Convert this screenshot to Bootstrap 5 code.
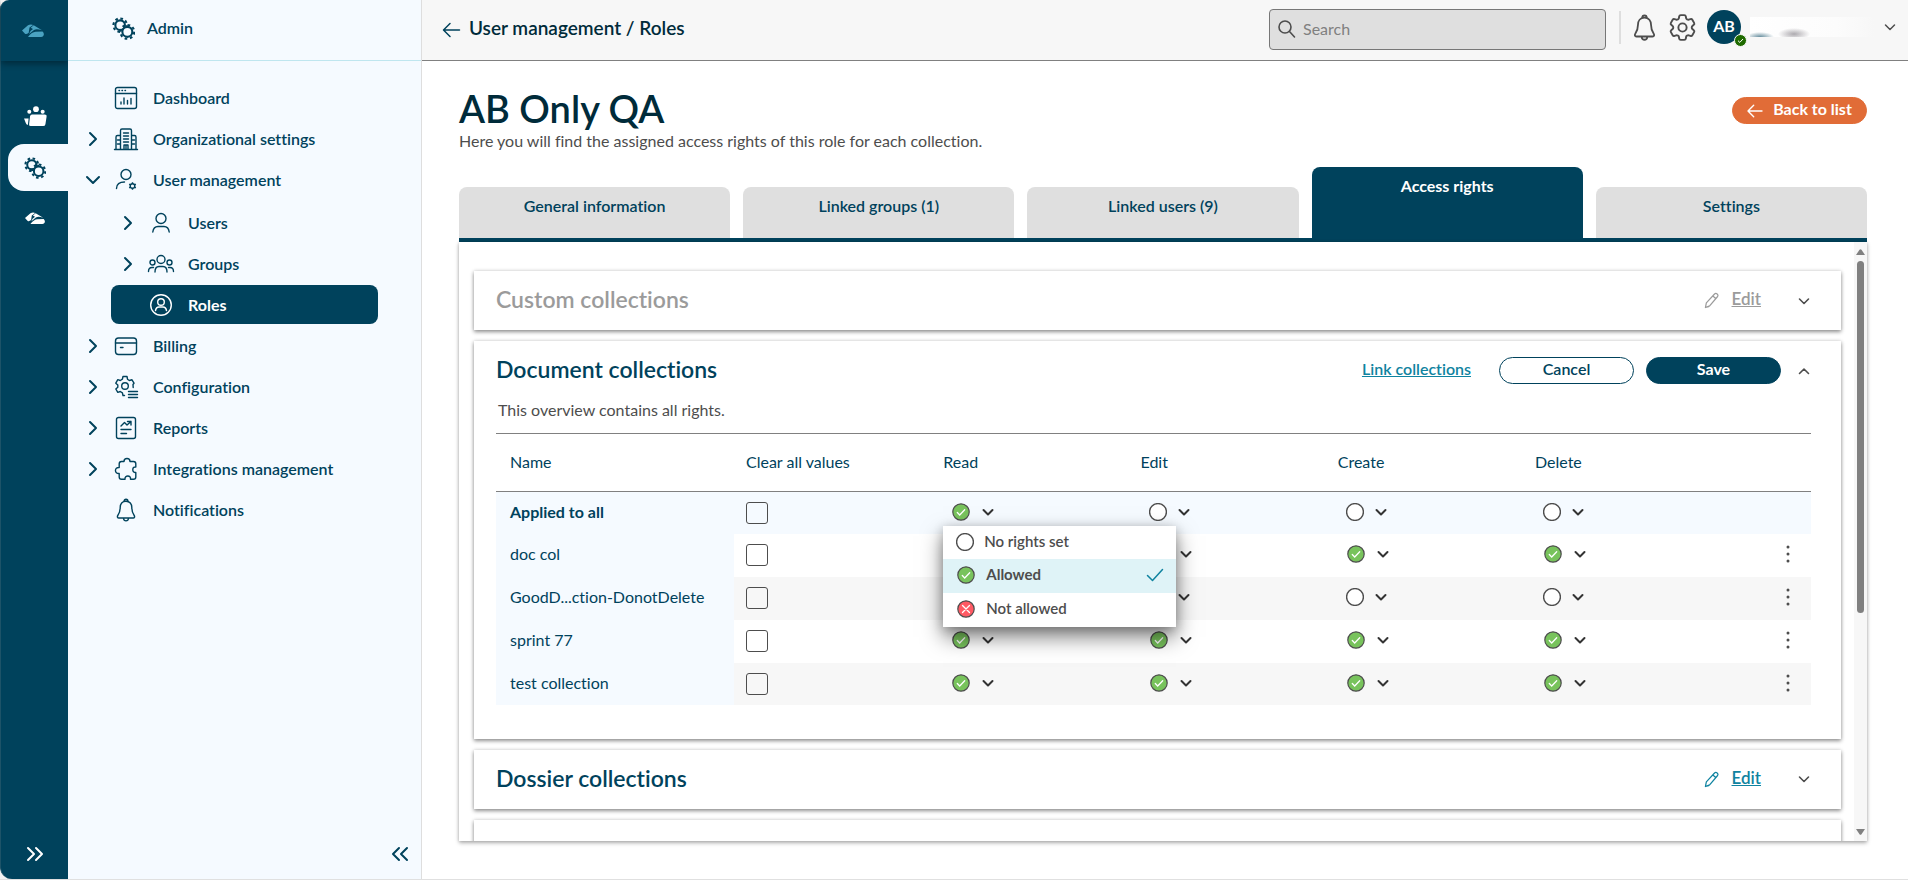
<!DOCTYPE html>
<html lang="en">
<head>
<meta charset="utf-8">
<meta name="viewport" content="width=device-width, initial-scale=1">
<title>User management / Roles</title>
<link href="https://cdn.jsdelivr.net/npm/bootstrap@5.3.0/dist/css/bootstrap.min.css" rel="stylesheet">
<style>
:root { --navy: #00425c; --ink: #002b3a; --teal: #0f83a0; --pale: #f5faff; --grey: #4d4d4d; --line: #808080; }
body { font-family: Lato, "Open Sans", sans-serif; font-size: 16px; line-height: 22px; color: var(--grey); font-variant-ligatures: none; background: #f2f2f2; }
svg { display: block; flex: none; overflow: visible; }
.ico { fill: none; stroke: currentColor; stroke-width: 2; stroke-linecap: round; stroke-linejoin: round; }
.iconbtn { border: 0; background: none; padding: 0; color: inherit; display: block; }
.app-frame { border-bottom: 1px solid #e0e0e0; }

/* Module rail */
.rail { width: 68px; background: var(--navy); color: #fff; border-radius: 9px 0 0 12px; border-left: 1px solid #1d5368; }
.rail-logo { height: 61px; color: #4aa3c2; box-shadow: 0 3px 6px rgba(0,0,0,.35); padding-right: 3px; }
.rail a { color: #fff; height: 47px; margin-left: 7px; padding-right: 6px; }
.rail a.current { background: var(--pale); color: var(--navy); border-radius: 16px 0 0 16px; }

/* Section menu */
.side { width: 354px; background: var(--pale); border-right: 1px solid #dedede; color: var(--navy); font-weight: 600; }
.side-head { height: 61px; border-bottom: 1px solid #bfe6ef; padding: 0 0 4px 44px; gap: 12px; }
.menu { padding-top: 16px; }
.menu a { color: var(--navy); text-decoration: none; display: flex; align-items: center; height: 41px; padding-left: 14px; }
.menu .twist { width: 22px; height: 22px; margin-right: 10px; }
.menu .glyph { width: 24px; height: 24px; margin-right: 15px; stroke-width: 1.4; }
.menu ul { margin: 3px 0 1px; }
.menu ul a { height: 39px; margin: 2px 43px 0; padding-left: 6px; border-radius: 8px; }
.menu ul a.current { background: var(--navy); color: #fff; font-weight: 700; }

/* Top bar */
.topbar { height: 61px; background: #f7f7f7; border-bottom: 1px solid var(--line); padding: 0 11px 2px 20px; }
.crumbs { color: var(--ink); font-size: 19px; font-weight: 600; text-decoration: none; padding-bottom: 2px; }
.searchbox { width: 337px; height: 41px; background: #dfdfdf; border: 1px solid #777; border-radius: 4px; padding: 0 8px; gap: 8px; margin-right: 13px; }
.searchbox input { border: 0; background: none; outline: 0; width: 100%; height: 32px; line-height: 30px; padding: 0 0 2px; color: var(--grey); }
.searchbox input::placeholder { color: #808080; opacity: 1; }
.divider { width: 2px; height: 33px; background: #dedede; margin-right: 10px; }
.avatar { width: 34px; height: 34px; border-radius: 50%; background: var(--navy); color: #fff; font-weight: 700; margin: 0 9px 0 8px; padding-bottom: 2px; }
.avatar svg { right: -6px; bottom: -3px; }
.username { width: 124px; height: 20px; margin-right: 9px; background: radial-gradient(14px 5px at 10px 20px, #00425c99, transparent), radial-gradient(16px 6px at 44px 17px, #66616a88, transparent), linear-gradient(90deg, #fff, #fcfcfc 70%, #f7f7f7); }

/* Page heading and tabs */
.page { padding: 25px 41px 38px 37px; }
h1 { font-size: 38px; line-height: 44px; font-weight: 600; color: var(--ink); }
.btn { line-height: 22px; font-size: 16px; height: 27px; border-radius: 14px; padding: 0 14px 4px; display: flex; align-items: center; justify-content: center; font-weight: 700; }
.btn-back { --bs-btn-bg: #e16c37; --bs-btn-color: #fff; --bs-btn-border-color: #e16c37; --bs-btn-hover-bg: #c95a28; --bs-btn-hover-color: #fff; width: 135px; margin-top: 11px; gap: 10px; }
.btn-save { --bs-btn-bg: var(--navy); --bs-btn-color: #fff; --bs-btn-border-color: var(--navy); --bs-btn-hover-bg: var(--ink); --bs-btn-hover-color: #fff; width: 135px; }
.btn-cancel { --bs-btn-bg: #fff; --bs-btn-color: var(--navy); --bs-btn-border-color: var(--navy); --bs-btn-hover-color: var(--navy); width: 135px; margin: 0 12px 0 28px; font-weight: 600; }
.tabbar { border-bottom: 4px solid var(--navy); gap: 13px; margin-top: 15px; }
.tabbar a { flex: 1 1 0; height: 51px; padding-top: 8px; background: #dfdfdf; color: var(--navy); text-align: center; text-decoration: none; font-weight: 600; border-radius: 8px 8px 0 0; }
.tabbar a.active { height: 71px; background: var(--navy); color: #fff; font-weight: 700; }

/* Scrolling panel */
.panel { min-height: 0; box-shadow: 0 2px 4px rgba(0,0,0,.3), 0 0 3px rgba(0,0,0,.15); background: #fff; }
.panel-body { padding: 29px 13px 0 15px; gap: 11px; overflow: hidden; }
.track { width: 13px; background: #f7f7f7; padding: 7px 0 6px; color: var(--line); }
.thumb { width: 7px; height: 60%; margin: 6px 0 auto; border-radius: 4px; background: var(--line); }
.box { flex: none; background: #fff; padding: 0 30px 0 22px; box-shadow: 0 2px 4px rgba(0,0,0,.4), 0 0 4px rgba(0,0,0,.15); }
.box-head { height: 59px; }
.box-head h2 { font-size: 23px; line-height: 26px; font-weight: 600; color: var(--navy); margin: 0 auto 0 0; padding-bottom: 3px; }
.box-head a { color: var(--teal); font-weight: 600; padding-bottom: 3px; }
.box-head .edit { font-size: 17px; }
.box-head .edit svg { margin: 3px 13px 0 0; }
.box-head .edit + button { margin-left: 36px; }
.box-head.muted h2, .box-head.muted a { color: #9b9b9b; }
.box-open { padding-bottom: 34px; }
.intro { margin: 0 0 13px 2px; line-height: 20px; }

/* Rights table */
.rights { table-layout: fixed; border-top: 1px solid var(--line); --bs-table-color: var(--navy); color: var(--navy); margin: 0; }
.rights th, .rights td { height: 43px; padding: 0 12px 2px; border: 0; vertical-align: middle; font-weight: 400; }
.rights thead th { height: 58px; border-bottom: 1px solid var(--line); }
.rights tbody tr:first-child > *, .rights tbody tr:last-child > * { height: 42px; }
.rights th:first-child { width: 238px; padding-left: 14px; }
.rights thead th { width: 15%; }
.rights thead th:last-child { width: auto; }
.rights tbody th { --bs-table-bg: var(--pale); }
.rights tbody tr:nth-child(2n+3) { --bs-table-bg: #f7f7f7; }
.rights tbody tr.summary { --bs-table-bg: var(--pale); }
.rights .summary th { font-weight: 700; }
.rights .form-check-input { width: 22px; height: 22px; margin: 2px 0 0; border: 1px solid #4d4d4d; border-radius: 3px; background-color: transparent; display: block; }
.pick { border: 0; background: none; padding: 0 0 0 8px; display: flex; align-items: center; gap: 10px; color: #333; }
.choices { top: 24px; left: 0; width: 233px; padding: 0; border: 0; border-radius: 0; box-shadow: 0 10px 20px rgba(0,0,0,.5), 0 2px 10px rgba(0,0,0,.2); font-size: 15px; }
.choices .dropdown-item { height: 34px; padding: 0 12px 3px 13px; display: flex; align-items: center; gap: 10px; color: var(--grey); line-height: 20px; font-weight: 600; }
.choices .dropdown-item:first-child { height: 33px; }
.choices .picked { background: #dff3f7; font-weight: 700; }
.choices svg { margin-top: 2px; }
</style>
</head>
<body>
<svg width="0" height="0" class="position-absolute" aria-hidden="true">
  <defs>
    <mask id="cut"><path fill="#fff" d="M-2-2h30v30h-30z"/><circle cx="16" cy="15.500" r="5.800" fill="#000"/></mask>
    <symbol id="gears" viewBox="0 0 24 24"><g fill="none" stroke="currentColor"><g mask="url(#cut)"><circle cx="8.500" cy="8.500" r="5" stroke-width="2.200"/><circle cx="8.500" cy="8.500" r="7" stroke-width="2.200" stroke-dasharray="2.800 2.698"/></g><circle cx="16" cy="15.500" r="5.200" stroke-width="2.200"/><circle cx="16" cy="15.500" r="7.200" stroke-width="2.200" stroke-dasharray="2.800 2.855"/></g></symbol>
    <symbol id="logo" viewBox="0 0 22 14"><g fill="currentColor"><path d="M0 6.500 6 1.300Q8.500-.3 11.200.9L7.500 3.600 6.700 8.700Q4.500 10.500 3 9.700Z"/><path d="M8.700 3.800 11.700 1.200 20 6.300Q14.500 4.200 12 6L7 10Q7.800 6.800 11 5Z"/><path d="M6.300 12.600Q10 8 13.500 7.800L20.500 7.600Q23 10 21 12.200 20.500 13 19 13H7Q6 13.200 6.300 12.600Z"/></g></symbol>
    <symbol id="team" viewBox="0 0 24 22"><g fill="currentColor"><circle cx="12.500" cy="3.300" r="3"/><circle cx="5.500" cy="6" r="2.100"/><circle cx="19.500" cy="6" r="2.100"/><path d="M8.300 9H21.500Q24 9 23.600 11.300L22.400 19Q22 21 20 21H7Q5 21 5.300 19L6.300 10.800Q6.600 9 8.300 9Z"/><path d="M0 13H4.800L4 20Q2.200 19.500 1.700 17.500Z"/></g></symbol>
    <symbol id="down" viewBox="0 0 14 14"><path d="m2.500 5 4.500 4.500L11.500 5"/></symbol>
    <symbol id="up" viewBox="0 0 14 14"><path d="M2.500 9.500 7 5l4.500 4.500"/></symbol>
    <symbol id="back" viewBox="0 0 18 16"><path d="M17 8H1.500M7.500 1.500 1 8l6.500 6.500"/></symbol>
    <symbol id="bell" viewBox="0 0 24 24"><path d="M12 3.200c-3.800 0-5.800 2.900-5.800 6.300 0 4-.6 5.500-2.400 8-.8 1.200-.3 2.500 1 2.500h14.400c1.300 0 1.800-1.300 1-2.500-1.800-2.500-2.400-4-2.400-8 0-3.400-2-6.300-5.800-6.300ZM10 3.500c0-3 4-3 4 0M9.500 20.500c.4 3.200 4.600 3.200 5 0"/></symbol>
    <symbol id="cog" viewBox="0 0 24 24"><path d="M9.594 3.940c.09-.542.56-.94 1.110-.94h2.593c.55 0 1.020.398 1.110.94l.213 1.281c.063.374.313.686.645.87.074.04.147.083.22.127.325.196.72.257 1.075.124l1.217-.456a1.125 1.125 0 0 1 1.370.49l1.296 2.247a1.125 1.125 0 0 1-.26 1.431l-1.003.827c-.293.241-.438.613-.43.992a7.723 7.723 0 0 1 0 .255c-.008.378.137.75.43.991l1.004.827c.424.35.534.955.26 1.430l-1.298 2.247a1.125 1.125 0 0 1-1.369.491l-1.217-.456c-.355-.133-.75-.072-1.076.124a6.470 6.470 0 0 1-.22.128c-.331.183-.581.495-.644.869l-.213 1.281c-.09.543-.56.94-1.110.94h-2.594c-.55 0-1.019-.398-1.110-.94l-.213-1.281c-.062-.374-.312-.686-.644-.87a6.520 6.520 0 0 1-.22-.127c-.325-.196-.72-.257-1.076-.124l-1.217.456a1.125 1.125 0 0 1-1.369-.49l-1.297-2.247a1.125 1.125 0 0 1 .26-1.431l1.004-.827c.292-.24.437-.613.43-.991a6.932 6.932 0 0 1 0-.255c.007-.38-.138-.751-.43-.992l-1.004-.827a1.125 1.125 0 0 1-.26-1.430l1.297-2.247a1.125 1.125 0 0 1 1.370-.491l1.216.456c.356.133.751.072 1.076-.124.072-.044.146-.086.22-.128.332-.183.582-.495.644-.869l.214-1.280Z"/><circle cx="12" cy="12" r="3"/></symbol>
    <symbol id="user" viewBox="0 0 24 24"><circle cx="12" cy="7.500" r="5"/><path d="M3.800 21c.5-4 2.200-5.500 5.200-5.500h6c3 0 4.700 1.500 5.200 5.500"/></symbol>
    <symbol id="pencil" viewBox="0 0 16 18"><path d="m1.500 16.500 1-5L11 2.300c2-2 5 .5 3.300 2.700L6 14.700ZM9.500 4.200l3 2.700M1.500 16.500l3.500-1"/></symbol>
    <symbol id="allowed" viewBox="0 0 20 20"><circle cx="10" cy="10" r="8.200" fill="#78c35c" stroke="#4d4d4d" stroke-width="1.200"/><path d="m6.300 10.500 2.400 2.500 5-5.300" fill="none" stroke="#fff" stroke-width="1.300" stroke-linecap="round"/></symbol>
    <symbol id="denied" viewBox="0 0 20 20"><circle cx="10" cy="10" r="8.200" fill="#ff5a64" stroke="#4d4d4d" stroke-width="1.200"/><path d="m6.500 6.500 7 7m0-7-7 7" fill="none" stroke="#fff" stroke-width="1.300" stroke-linecap="round"/></symbol>
    <symbol id="unset" viewBox="0 0 18 18"><circle cx="9" cy="9" r="8.400" fill="#fff" stroke="#4d4d4d" stroke-width="1.400"/></symbol>
    <symbol id="dots" viewBox="0 0 6 20"><g fill="#4d4d4d"><circle cx="3" cy="3" r="1.500"/><circle cx="3" cy="10" r="1.500"/><circle cx="3" cy="17" r="1.500"/></g></symbol>
  </defs>
</svg>

<div class="app-frame d-flex vh-100 overflow-hidden">
  <nav class="rail d-flex flex-column flex-shrink-0" aria-label="Modules">
    <div class="rail-logo d-flex align-items-center justify-content-center"><svg width="22" height="14"><use href="#logo"/></svg></div>
    <div class="d-flex flex-column gap-1 pt-4 mt-2">
      <a href="#" class="d-flex align-items-center justify-content-center" aria-label="Collaboration"><svg width="23" height="21"><use href="#team"/></svg></a>
      <a href="#" class="current d-flex align-items-center justify-content-center" aria-label="Admin"><svg width="22" height="22"><use href="#gears"/></svg></a>
      <a href="#" class="d-flex align-items-center justify-content-center" aria-label="Home"><svg width="20" height="13"><use href="#logo"/></svg></a>
    </div>
    <button class="iconbtn mt-auto mb-3 align-self-center" aria-label="Expand modules"><svg class="ico" width="18" height="18" viewBox="0 0 18 18"><path d="m2 3 6 6-6 6M10 3l6 6-6 6"/></svg></button>
  </nav>

  <aside class="side d-flex flex-column flex-shrink-0">
    <div class="side-head d-flex align-items-center"><svg width="23" height="23"><use href="#gears"/></svg>Admin</div>
    <ul class="menu list-unstyled mb-0">
      <li><a href="#"><span class="twist"></span><svg class="ico glyph" viewBox="0 0 24 24"><rect x="1.500" y="1.500" width="21" height="21" rx="2"/><path d="M1.500 7.500h21M5 4.500h.5M8 4.500h.5M11 4.500h.5M7 18v-2M10 18v-6M13.500 18v-3.500M17 18v-5.500"/></svg>Dashboard</a></li>
      <li><a href="#"><svg class="ico twist" viewBox="0 0 22 22"><path d="m8 5 6 6-6 6"/></svg><svg class="ico glyph" viewBox="0 0 24 24"><path d="M.5 22.500h23M2 22.500V10c0-1 .5-1.500 1.500-1.500h3M22 22.500V10c0-1-.5-1.500-1.500-1.500h-3M6.500 22.500v-19c0-1 .5-1.500 1.500-1.500h8c1 0 1.500.5 1.500 1.500v19M9.500 6h5M9.500 9h5M9.500 12h5M9.500 15h5M3.500 13h2M3.500 17h2M18.500 13h2M18.500 17h2M10 22.500V18h4v4.500M12 18v4.500"/></svg>Organizational settings</a></li>
      <li><a href="#"><svg class="ico twist" viewBox="0 0 22 22"><path d="m5 8 6 6 6-6"/></svg><svg class="ico glyph" viewBox="0 0 24 24"><circle cx="12" cy="6.500" r="5"/><path d="M2.500 20.500c0-4.500 3-6.500 8-6.500"/><circle cx="18.500" cy="18" r="2.300"/><path stroke-linecap="butt" d="M18.500 14.200v1.500M18.500 20.300v1.500M15.200 16.100l1.300.8M20.500 19.100l1.300.8M15.200 19.900l1.300-.8M20.500 16.900l1.300-.8"/></svg>User management</a>
        <ul class="list-unstyled">
          <li><a href="#"><svg class="ico twist" viewBox="0 0 22 22"><path d="m8 5 6 6-6 6"/></svg><svg class="ico glyph"><use href="#user"/></svg>Users</a></li>
          <li><a href="#"><svg class="ico twist" viewBox="0 0 22 22"><path d="m8 5 6 6-6 6"/></svg><svg class="ico glyph" viewBox="0 0 24 24"><circle cx="12" cy="7.500" r="4"/><circle cx="3.500" cy="10.500" r="2.500"/><circle cx="20.500" cy="10.500" r="2.500"/><path d="M6 20c0-4 1.500-5.500 4-5.500h4c2.500 0 4 1.500 4 5.500M-.5 19.500c0-2.500.8-4 3.500-4h1.500M24.500 19.500c0-2.500-.8-4-3.500-4h-1.500"/></svg>Groups</a></li>
          <li><a href="#" class="current"><span class="twist"></span><svg class="ico glyph" viewBox="0 0 24 24"><circle cx="12" cy="12" r="10.300"/><circle cx="12" cy="9" r="3.300"/><path d="M6.500 17.500c.5-2.700 1.500-3.500 3.500-3.500h4c2 0 3 .8 3.500 3.500"/></svg>Roles</a></li>
        </ul>
      </li>
      <li><a href="#"><svg class="ico twist" viewBox="0 0 22 22"><path d="m8 5 6 6-6 6"/></svg><svg class="ico glyph" viewBox="0 0 24 24"><rect x="1.500" y="4" width="21" height="16.500" rx="3"/><path d="M1.500 9h21M6.500 13.500h2.500"/></svg>Billing</a></li>
      <li><a href="#"><svg class="ico twist" viewBox="0 0 22 22"><path d="m8 5 6 6-6 6"/></svg><svg class="ico glyph" viewBox="0 0 24 24"><circle cx="11" cy="11" r="3.300"/><path d="M19.200 12.500 19 9.500 20 8.200 18 4.800 15.300 5.500 13.500 4.200 13 1.500H9L8.400 4.200 6.300 5.500 3.800 4.700 1.800 8.200 3.800 10v2.200L1.800 14l2 3.300 2.500-.8 2.100 1.300.6 2.700h1.500M14.500 16.500h9M14.500 19.500h9M14.500 22.500h9"/></svg>Configuration</a></li>
      <li><a href="#"><svg class="ico twist" viewBox="0 0 22 22"><path d="m8 5 6 6-6 6"/></svg><svg class="ico glyph" viewBox="0 0 24 24"><rect x="2.500" y="1.500" width="19" height="21" rx="2"/><path d="m7 10 3.500-3.500L13 9l4-3.500M13.500 5.500H17V9M7 13.500h10M7 17.500h5.500"/></svg>Reports</a></li>
      <li><a href="#"><svg class="ico twist" viewBox="0 0 22 22"><path d="m8 5 6 6-6 6"/></svg><svg class="ico glyph" viewBox="0 0 24 24"><path d="M10 4.500c0-4 6-4 6 0h3.500c1.500 0 2.300.8 2.300 2.300V10c-4-.8-4 6 0 5.500v4.500c0 1.500-.8 2.300-2.300 2.300h-3c.8-4.500-6-4.500-5.500 0H7.500c-1.500 0-2.300-.8-2.300-2.300v-3.500c-5 .5-5-6.500 0-6V6.800c0-1.500.8-2.300 2.300-2.300Z"/></svg>Integrations management</a></li>
      <li><a href="#"><span class="twist"></span><svg class="ico glyph"><use href="#bell"/></svg>Notifications</a></li>
    </ul>
    <button class="iconbtn mt-auto mb-3 me-2 pe-1 align-self-end" aria-label="Collapse menu"><svg class="ico" width="18" height="18" viewBox="0 0 18 18"><path d="M8 3 2 9l6 6M16 3l-6 6 6 6"/></svg></button>
  </aside>

  <div class="flex-grow-1 d-flex flex-column bg-white overflow-hidden">
    <header class="topbar d-flex align-items-center flex-shrink-0">
      <a href="#" class="crumbs d-flex align-items-center me-auto gap-2"><svg class="ico mt-1" style="color:var(--navy);stroke-width:1.500" width="19" height="16"><use href="#back"/></svg>User management / Roles</a>
      <div class="searchbox d-flex align-items-center"><label for="search" aria-label="Search"><svg class="ico" width="17" height="18" viewBox="0 0 17 18" style="stroke-width:1.600"><circle cx="7" cy="7" r="6"/><path d="m11.500 11.500 5 5.500"/></svg></label><input id="search" type="text" placeholder="Search"></div>
      <div class="d-flex align-items-center pb-1">
        <span class="divider"></span>
        <button class="iconbtn" aria-label="Notifications"><svg class="ico" width="27" height="27" style="stroke-width:1.600"><use href="#bell"/></svg></button>
        <button class="iconbtn ms-2" aria-label="Settings"><svg class="ico" width="33" height="33" style="stroke-width:1.400"><use href="#cog"/></svg></button>
        <div class="avatar position-relative d-flex align-items-center justify-content-center">AB<svg class="position-absolute" width="13" height="13" viewBox="0 0 13 13"><circle cx="6.500" cy="6.500" r="6" fill="#1f6a00" stroke="#f7f7f7"/><path d="m4 6.700 1.800 1.700L9 5" fill="none" stroke="#fff"/></svg></div>
        <div class="username"></div>
        <button class="iconbtn" aria-label="Account menu"><svg class="ico" width="14" height="14" style="stroke-width:1.500"><use href="#down"/></svg></button>
      </div>
    </header>

    <main class="page flex-grow-1 d-flex flex-column overflow-hidden">
      <div class="d-flex justify-content-between align-items-start">
        <div>
          <h1 class="mb-0">AB Only QA</h1>
          <p class="mb-0">Here you will find the assigned access rights of this role for each collection.</p>
        </div>
        <button class="btn btn-back"><svg class="ico mt-1" width="16" height="14" style="stroke-width:1.600"><use href="#back"/></svg>Back to list</button>
      </div>

      <nav class="tabbar d-flex align-items-end" aria-label="Role sections">
        <a href="#">General information</a>
        <a href="#">Linked groups (1)</a>
        <a href="#">Linked users (9)</a>
        <a href="#" class="active" aria-current="page">Access rights</a>
        <a href="#">Settings</a>
      </nav>

      <div class="panel flex-grow-1 d-flex">
        <div class="panel-body flex-grow-1 d-flex flex-column">
          <section class="box">
            <div class="box-head muted d-flex align-items-center">
              <h2>Custom collections</h2>
              <a href="#" class="edit d-flex align-items-center"><svg class="ico" width="15" height="17" style="stroke-width:1.300"><use href="#pencil"/></svg>Edit</a>
              <button class="iconbtn" aria-label="Expand"><svg class="ico" width="14" height="14" style="stroke-width:1.600"><use href="#down"/></svg></button>
            </div>
          </section>

          <section class="box box-open">
            <div class="box-head d-flex align-items-center">
              <h2>Document collections</h2>
              <a href="#">Link collections</a>
              <button class="btn btn-cancel">Cancel</button>
              <button class="btn btn-save">Save</button>
              <button class="iconbtn ms-3" aria-label="Collapse"><svg class="ico" width="14" height="14" style="stroke-width:1.600"><use href="#up"/></svg></button>
            </div>
            <p class="intro">This overview contains all rights.</p>
            <table class="table rights">
              <thead>
                <tr><th scope="col">Name</th><th scope="col">Clear all values</th><th scope="col">Read</th><th scope="col">Edit</th><th scope="col">Create</th><th scope="col">Delete</th><th></th></tr>
              </thead>
              <tbody>
                <tr class="summary">
                  <th scope="row">Applied to all</th>
                  <td><input class="form-check-input" type="checkbox" aria-label="Clear all"></td>
                  <td><div class="dropdown">
                    <button class="pick" aria-expanded="true" aria-label="Read: allowed"><svg width="20" height="20"><use href="#allowed"/></svg><svg class="ico" width="14" height="14"><use href="#down"/></svg></button>
                    <div class="dropdown-menu choices show">
                      <button class="dropdown-item"><svg width="18" height="18"><use href="#unset"/></svg>No rights set</button>
                      <button class="dropdown-item picked"><svg width="20" height="20"><use href="#allowed"/></svg>Allowed<svg class="ico ms-auto" width="18" height="14" viewBox="0 0 18 14" style="color:var(--teal);stroke-width:1.500"><path d="m1.500 7.500 5 5L16.500 1.500"/></svg></button>
                      <button class="dropdown-item"><svg width="20" height="20"><use href="#denied"/></svg>Not allowed</button>
                    </div>
                  </div></td>
                  <td><button class="pick" aria-label="Edit: no rights set"><svg width="18" height="18"><use href="#unset"/></svg><svg class="ico" width="14" height="14"><use href="#down"/></svg></button></td>
                  <td><button class="pick" aria-label="Create: no rights set"><svg width="18" height="18"><use href="#unset"/></svg><svg class="ico" width="14" height="14"><use href="#down"/></svg></button></td>
                  <td><button class="pick" aria-label="Delete: no rights set"><svg width="18" height="18"><use href="#unset"/></svg><svg class="ico" width="14" height="14"><use href="#down"/></svg></button></td>
                  <td></td>
                </tr>
                <tr>
                  <th scope="row">doc col</th>
                  <td><input class="form-check-input" type="checkbox" aria-label="Clear doc col"></td>
                  <td><button class="pick" aria-label="Read: allowed"><svg width="20" height="20"><use href="#allowed"/></svg><svg class="ico" width="14" height="14"><use href="#down"/></svg></button></td>
                  <td><button class="pick" aria-label="Edit: allowed"><svg width="20" height="20"><use href="#allowed"/></svg><svg class="ico" width="14" height="14"><use href="#down"/></svg></button></td>
                  <td><button class="pick" aria-label="Create: allowed"><svg width="20" height="20"><use href="#allowed"/></svg><svg class="ico" width="14" height="14"><use href="#down"/></svg></button></td>
                  <td><button class="pick" aria-label="Delete: allowed"><svg width="20" height="20"><use href="#allowed"/></svg><svg class="ico" width="14" height="14"><use href="#down"/></svg></button></td>
                  <td><button class="iconbtn ms-auto me-2" aria-label="More"><svg width="6" height="20"><use href="#dots"/></svg></button></td>
                </tr>
                <tr>
                  <th scope="row">GoodD...ction-DonotDelete</th>
                  <td><input class="form-check-input" type="checkbox" aria-label="Clear GoodD...ction-DonotDelete"></td>
                  <td><button class="pick" aria-label="Read: no rights set"><svg width="18" height="18"><use href="#unset"/></svg><svg class="ico" width="14" height="14"><use href="#down"/></svg></button></td>
                  <td><button class="pick" aria-label="Edit: no rights set"><svg width="18" height="18"><use href="#unset"/></svg><svg class="ico" width="14" height="14"><use href="#down"/></svg></button></td>
                  <td><button class="pick" aria-label="Create: no rights set"><svg width="18" height="18"><use href="#unset"/></svg><svg class="ico" width="14" height="14"><use href="#down"/></svg></button></td>
                  <td><button class="pick" aria-label="Delete: no rights set"><svg width="18" height="18"><use href="#unset"/></svg><svg class="ico" width="14" height="14"><use href="#down"/></svg></button></td>
                  <td><button class="iconbtn ms-auto me-2" aria-label="More"><svg width="6" height="20"><use href="#dots"/></svg></button></td>
                </tr>
                <tr>
                  <th scope="row">sprint 77</th>
                  <td><input class="form-check-input" type="checkbox" aria-label="Clear sprint 77"></td>
                  <td><button class="pick" aria-label="Read: allowed"><svg width="20" height="20"><use href="#allowed"/></svg><svg class="ico" width="14" height="14"><use href="#down"/></svg></button></td>
                  <td><button class="pick" aria-label="Edit: allowed"><svg width="20" height="20"><use href="#allowed"/></svg><svg class="ico" width="14" height="14"><use href="#down"/></svg></button></td>
                  <td><button class="pick" aria-label="Create: allowed"><svg width="20" height="20"><use href="#allowed"/></svg><svg class="ico" width="14" height="14"><use href="#down"/></svg></button></td>
                  <td><button class="pick" aria-label="Delete: allowed"><svg width="20" height="20"><use href="#allowed"/></svg><svg class="ico" width="14" height="14"><use href="#down"/></svg></button></td>
                  <td><button class="iconbtn ms-auto me-2" aria-label="More"><svg width="6" height="20"><use href="#dots"/></svg></button></td>
                </tr>
                <tr>
                  <th scope="row">test collection</th>
                  <td><input class="form-check-input" type="checkbox" aria-label="Clear test collection"></td>
                  <td><button class="pick" aria-label="Read: allowed"><svg width="20" height="20"><use href="#allowed"/></svg><svg class="ico" width="14" height="14"><use href="#down"/></svg></button></td>
                  <td><button class="pick" aria-label="Edit: allowed"><svg width="20" height="20"><use href="#allowed"/></svg><svg class="ico" width="14" height="14"><use href="#down"/></svg></button></td>
                  <td><button class="pick" aria-label="Create: allowed"><svg width="20" height="20"><use href="#allowed"/></svg><svg class="ico" width="14" height="14"><use href="#down"/></svg></button></td>
                  <td><button class="pick" aria-label="Delete: allowed"><svg width="20" height="20"><use href="#allowed"/></svg><svg class="ico" width="14" height="14"><use href="#down"/></svg></button></td>
                  <td><button class="iconbtn ms-auto me-2" aria-label="More"><svg width="6" height="20"><use href="#dots"/></svg></button></td>
                </tr>
              </tbody>
            </table>
          </section>

          <section class="box">
            <div class="box-head d-flex align-items-center">
              <h2>Dossier collections</h2>
              <a href="#" class="edit d-flex align-items-center"><svg class="ico" width="15" height="17" style="stroke-width:1.300"><use href="#pencil"/></svg>Edit</a>
              <button class="iconbtn" aria-label="Expand"><svg class="ico" width="14" height="14" style="stroke-width:1.600"><use href="#down"/></svg></button>
            </div>
          </section>
          <section class="box"><div class="box-head"></div></section>
        </div>
        <div class="track d-flex flex-column align-items-center flex-shrink-0" aria-hidden="true">
          <svg width="9" height="6" viewBox="0 0 9 6"><path d="M0 6 3.500.8Q4.500-.4 5.500.8L9 6Z" fill="currentColor"/></svg>
          <div class="thumb"></div>
          <svg width="9" height="6" viewBox="0 0 9 6"><path d="M0 0 3.500 5.200Q4.500 6.400 5.500 5.200L9 0Z" fill="currentColor"/></svg>
        </div>
      </div>
    </main>
  </div>
</div>
<script src="https://cdn.jsdelivr.net/npm/bootstrap@5.3.0/dist/js/bootstrap.bundle.min.js"></script>
</body>
</html>
